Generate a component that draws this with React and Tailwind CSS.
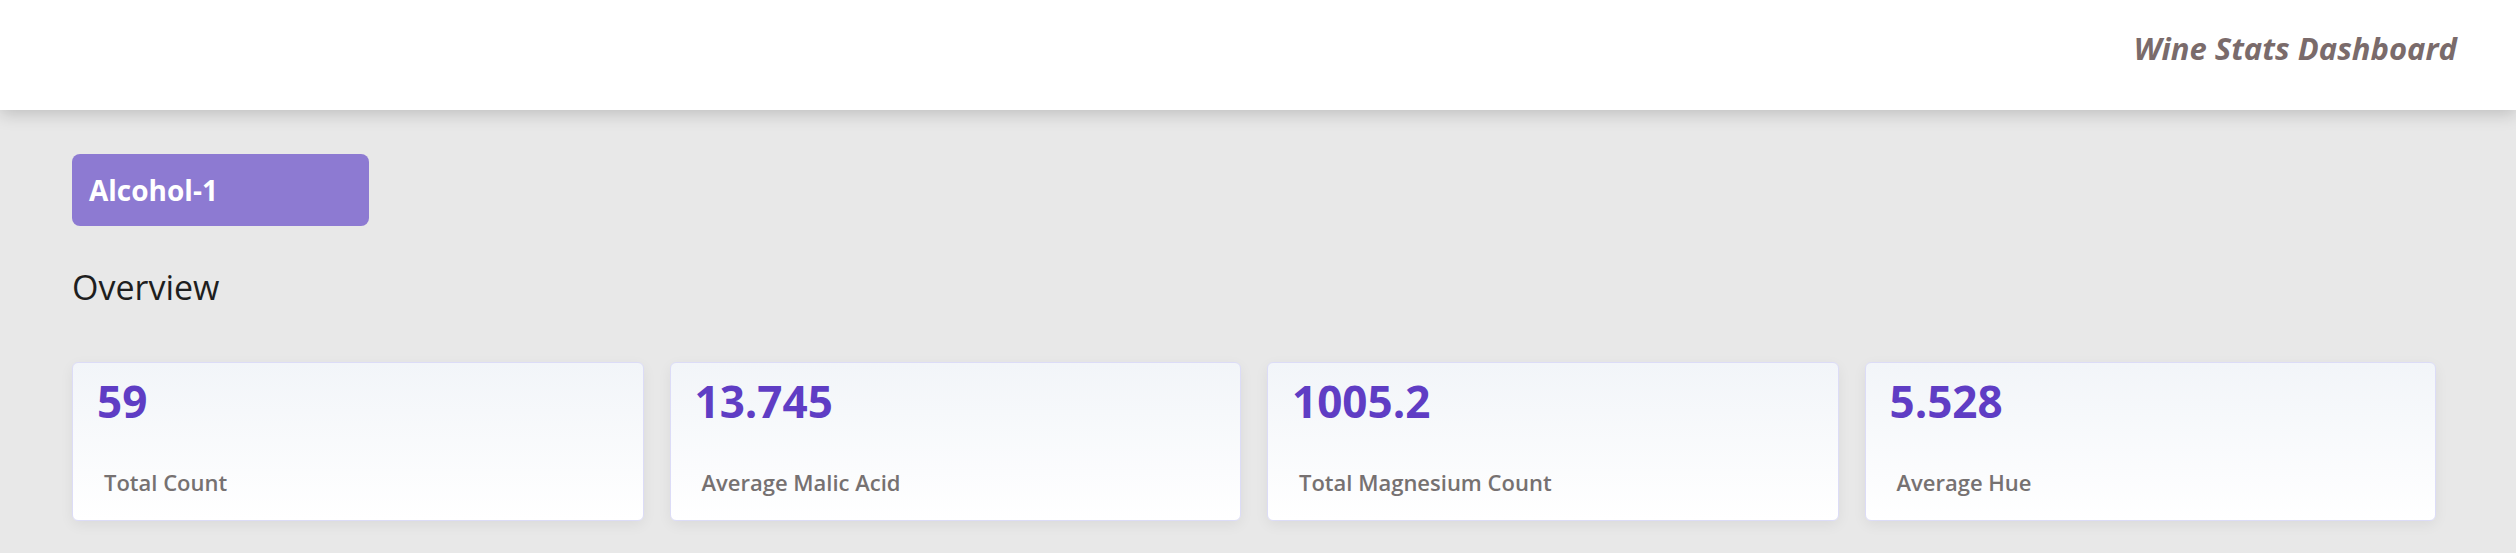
const stats = [
  { value: '59', label: 'Total Count' },
  { value: '13.745', label: 'Average Malic Acid' },
  { value: '1005.2', label: 'Total Magnesium Count' },
  { value: '5.528', label: 'Average Hue' },
]

const StatCard = ({ value, label }) => (
  <div className="rounded-md border border-[#dcdcf7] bg-gradient-to-b from-[#f2f5f9] to-white pl-6 pr-4 pt-2 pb-6 shadow-[0_4px_14px_rgba(0,0,0,0.06)]">
    <h2 className="text-[44px] font-bold leading-[60px] text-[#5f3dc4]">{value}</h2>
    <p className="mt-[37px] pl-[7px] text-[22px] font-semibold leading-[28px] text-[#767171]">{label}</p>
  </div>
)

export default function App() {
  return (
    <div className="min-h-screen bg-[#e8e8e8] font-['Open_Sans',sans-serif]">
      {/* Header */}
      <header className="relative z-10 flex h-[110px] items-start justify-end bg-white pr-[59px] shadow-[0_4px_16px_rgba(0,0,0,0.18)]">
        <h1 className="mt-[25px] text-[31px] font-bold italic leading-[46px] text-[#7a6b6b]">
          Wine Stats Dashboard
        </h1>
      </header>

      <main className="pl-[72px] pr-[80px] pt-[44px]">
        <button className="flex h-[72px] w-[297px] items-center rounded-lg bg-[#8d7ad2] pl-[17px] text-[28px] font-bold text-white">
          Alcohol-1
        </button>

        <h3 className="mt-[39px] text-[34px] font-medium leading-[44px] text-[#1e1e1e]">Overview</h3>

        <div className="mt-[53px] grid grid-cols-4 gap-[26px]">
          {stats.map((s) => (
            <StatCard key={s.label} {...s} />
          ))}
        </div>
      </main>
    </div>
  )
}
